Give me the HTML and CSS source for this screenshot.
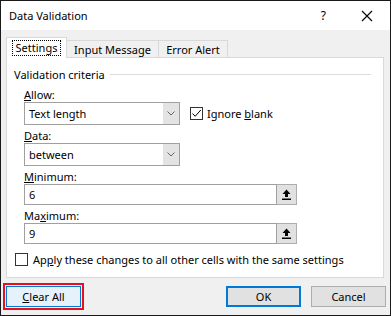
FILE: index.html
```html
<!DOCTYPE html>
<html lang="en">
<head>
    <meta charset="UTF-8">
    <title>Data Validation</title>
    <link rel="stylesheet" href="styles.css">
</head>
<body>

    <div class="dialog">
        <!-- Barra de título -->
        <div class="titlebar">
            <span class="title">Data Validation</span>
            <span class="help">?</span>
            <svg class="close" width="12" height="12" viewBox="0 0 12 12">
                <path d="M1 1 L11 11 M11 1 L1 11" stroke="#000" stroke-width="1.1" fill="none"/>
            </svg>
        </div>

        <div class="content">
            <!-- Pestañas -->
            <div class="tabs">
                <div class="tab active" style="width: 61px;"><span class="focus">Settings</span></div>
                <div class="tab" style="width: 93px;">Input Message</div>
                <div class="tab" style="width: 70px;">Error Alert</div>
            </div>

            <div class="panel">
                <div class="group-title">
                    <span>Validation criteria</span>
                    <span class="rule"></span>
                </div>

                <div class="group">
                    <div class="field-label"><u>A</u>llow:</div>
                    <div class="row">
                        <div class="select">
                            <span class="select-text">Text length</span>
                            <span class="select-arrow">
                                <svg width="8" height="5" viewBox="0 0 8 5"><polyline points="0.5,0.5 4,4 7.5,0.5" stroke="#666" fill="none"/></svg>
                            </span>
                        </div>
                        <div class="check ignore">
                            <span class="box">
                                <svg width="11" height="11" viewBox="0 0 11 11"><polyline points="1.5,5.5 4.2,8.3 9.8,2" stroke="#000" stroke-width="1" fill="none"/></svg>
                            </span>
                            <span>Ignore <u>b</u>lank</span>
                        </div>
                    </div>

                    <div class="field-label gap"><u>D</u>ata:</div>
                    <div class="select">
                        <span class="select-text">between</span>
                        <span class="select-arrow">
                            <svg width="8" height="5" viewBox="0 0 8 5"><polyline points="0.5,0.5 4,4 7.5,0.5" stroke="#666" fill="none"/></svg>
                        </span>
                    </div>

                    <div class="field-label gap"><u>M</u>inimum:</div>
                    <div class="range">
                        <div class="range-input">6</div>
                        <div class="range-btn">
                            <svg width="9" height="11" viewBox="0 0 9 11"><polygon points="4.5,0.5 8.5,5 6,5 6,8 3,8 3,5 0.5,5" fill="#000"/><rect x="0" y="9.5" width="9" height="1.5" fill="#000"/></svg>
                        </div>
                    </div>

                    <div class="field-label gap">Ma<u>x</u>imum:</div>
                    <div class="range">
                        <div class="range-input">9</div>
                        <div class="range-btn">
                            <svg width="9" height="11" viewBox="0 0 9 11"><polygon points="4.5,0.5 8.5,5 6,5 6,8 3,8 3,5 0.5,5" fill="#000"/><rect x="0" y="9.5" width="9" height="1.5" fill="#000"/></svg>
                        </div>
                    </div>
                </div>

                <div class="check apply">
                    <span class="box"></span>
                    <span>Ap<u>p</u>ly these changes to all other cells with the same settings</span>
                </div>
            </div>
        </div>

        <!-- Botones -->
        <div class="actions">
            <div class="highlight">
                <button class="btn btn-clear"><u>C</u>lear All</button>
            </div>
            <button class="btn btn-ok">OK</button>
            <button class="btn btn-cancel">Cancel</button>
        </div>
    </div>

</body>
</html>
```

FILE: styles.css
```css
* {
    box-sizing: border-box;
}

body {
    margin: 0;
    font-family: "Noto Sans", sans-serif;
    font-size: 11px;
    color: #000;
    background-color: #fff;
}

.dialog {
    width: 391px;
    height: 316px;
    border: 1px solid #1a1a1a;
    background-color: #f0f0f0;
    display: flex;
    flex-direction: column;
}

.titlebar {
    height: 29px;
    background-color: #fff;
    display: flex;
    align-items: center;
    padding-left: 8px;
}

.help {
    margin-left: auto;
    margin-right: 35px;
    font-size: 12px;
}

.close {
    margin-right: 17px;
}

.content {
    padding: 7px 6px 0 5px;
}

/* Pestañas */
.tabs {
    display: flex;
    align-items: flex-end;
    height: 20px;
}

.tab {
    height: 17px;
    border: 1px solid #d9d9d9;
    border-bottom: none;
    margin-left: -1px;
    background-color: #f0f0f0;
    display: flex;
    align-items: center;
    justify-content: center;
    line-height: 15px;
}

.tab.active {
    height: 21px;
    margin-left: 0;
    margin-bottom: -1px;
    background-color: #fff;
    position: relative;
    z-index: 1;
}

.focus {
    border: 1px dotted #000;
    padding: 0 3px;
    line-height: 14px;
}

.panel {
    background-color: #fff;
    border: 1px solid #d9d9d9;
    height: 221px;
    padding: 9px 7px 0 7px;
}

.group-title {
    display: flex;
    align-items: center;
    gap: 5px;
    line-height: 15px;
}

.rule {
    flex: 1;
    height: 1px;
    background-color: #dcdcdc;
    margin-right: 5px;
}

.group {
    padding-left: 10px;
    margin-top: 5px;
}

.field-label {
    line-height: 15px;
}

.field-label.gap {
    margin-top: 3px;
}

.row {
    display: flex;
    align-items: center;
}

/* Listas desplegables */
.select {
    width: 156px;
    height: 23px;
    border: 1px solid #a0a0a0;
    display: flex;
    background-color: #fff;
}

.select-text {
    flex: 1;
    padding-left: 4px;
    line-height: 21px;
}

.select-arrow {
    width: 16px;
    background-color: #e3e3e3;
    display: flex;
    align-items: center;
    justify-content: center;
}

/* Casillas */
.check {
    display: flex;
    align-items: center;
    gap: 4px;
    line-height: 15px;
}

.box {
    width: 13px;
    height: 13px;
    border: 1px solid #333;
    background-color: #fff;
    display: flex;
    align-items: center;
    justify-content: center;
}

.ignore {
    margin-left: 10px;
}

.apply {
    margin-top: 8px;
    margin-left: 1px;
    gap: 5px;
}

/* Campos con botón de rango */
.range {
    display: flex;
    width: 273px;
    height: 21px;
}

.range-input {
    flex: 1;
    border: 1px solid #a0a0a0;
    padding-left: 4px;
    line-height: 19px;
}

.range-btn {
    width: 20px;
    background-color: #e1e1e1;
    border: 1px solid #adadad;
    border-left: none;
    display: flex;
    align-items: center;
    justify-content: center;
}

/* Botones */
.actions {
    display: flex;
    align-items: center;
    padding: 5px 4px 0 2px;
}

.highlight {
    border: 2px solid #e8101c;
    padding: 1px;
}

.btn {
    width: 75px;
    height: 21px;
    font-family: "Noto Sans", sans-serif;
    font-size: 11px;
    color: #000;
    background-color: #e1e1e1;
    border: 1px solid #adadad;
    padding: 0;
}

.btn-clear {
    background-color: #e5f1fb;
    border-color: #0078d7;
}

.btn-ok {
    margin-left: auto;
    border: 2px solid #0078d7;
}

.btn-cancel {
    margin-left: 10px;
}
```
